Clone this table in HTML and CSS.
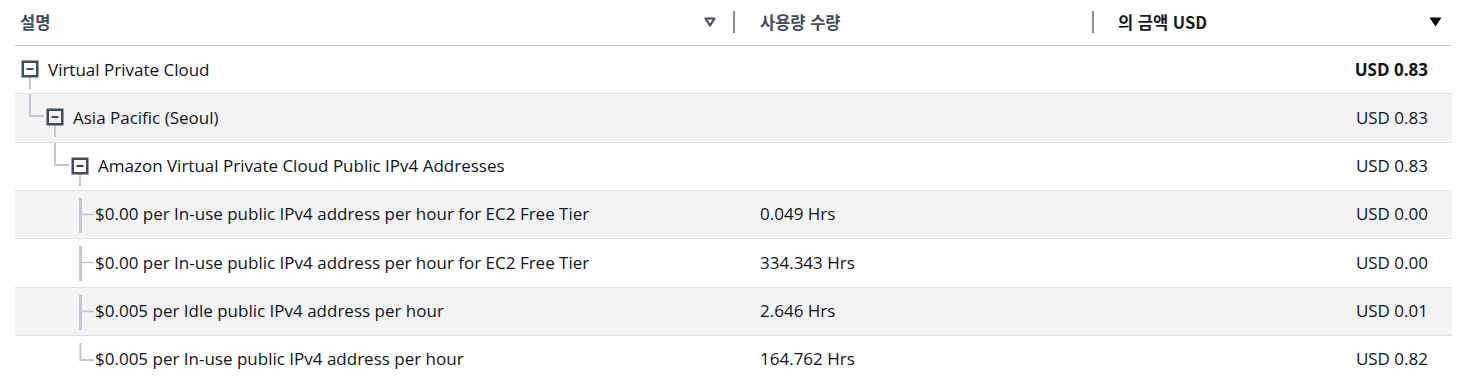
FILE: index.html
```html
<!DOCTYPE html>
<html lang="ko">
<head>
<meta charset="utf-8">
<link rel="stylesheet" href="styles.css">
</head>
<body>
<div class="table">
  <div class="row head">
    <div class="cell c1">
      <span class="htext">설명</span>
      <svg class="sort-outline" width="12" height="10" viewBox="0 0 12 10"><path d="M1.5 1.5 H10.5 L6 8.5 Z" fill="none" stroke="#414d5c" stroke-width="2.2" stroke-linejoin="round"/></svg>
      <span class="divider"></span>
    </div>
    <div class="cell c2"><span class="htext">사용량 수량</span><span class="divider"></span></div>
    <div class="cell c3"><span class="htext">의 금액 USD</span>
      <svg class="sort-filled" width="13" height="10" viewBox="0 0 13 10"><path d="M0.5 0.5 H12.5 L6.5 9.5 Z" fill="#000"/></svg>
    </div>
  </div>

  <div class="row">
    <div class="cell c1">
      <svg class="tree" width="33" height="48" viewBox="0 0 33 48">
        <line x1="15" y1="31" x2="15" y2="43" stroke="#c6c6cd" stroke-width="2"/>
        <rect x="7.75" y="15.75" width="14.5" height="14.5" fill="none" stroke="#414d5c" stroke-width="2.5"/>
        <line x1="11.5" y1="23" x2="18.5" y2="23" stroke="#414d5c" stroke-width="2"/>
      </svg>
      <span class="label">Virtual Private Cloud</span>
    </div>
    <div class="cell c2"></div>
    <div class="cell c3 bold">USD 0.83</div>
  </div>

  <div class="row alt">
    <div class="cell c1">
      <svg class="tree" width="58" height="48" viewBox="0 0 58 48">
        <polyline points="15,0 15,22 29,22" fill="none" stroke="#c6c6cd" stroke-width="2"/>
        <line x1="40" y1="31" x2="40" y2="43" stroke="#c6c6cd" stroke-width="2"/>
        <rect x="32.75" y="15.75" width="14.5" height="14.5" fill="none" stroke="#414d5c" stroke-width="2.5"/>
        <line x1="36.5" y1="23" x2="43.5" y2="23" stroke="#414d5c" stroke-width="2"/>
      </svg>
      <span class="label">Asia Pacific (Seoul)</span>
    </div>
    <div class="cell c2"></div>
    <div class="cell c3">USD 0.83</div>
  </div>

  <div class="row">
    <div class="cell c1">
      <svg class="tree" width="83" height="48" viewBox="0 0 83 48">
        <polyline points="40,0 40,22 54,22" fill="none" stroke="#c6c6cd" stroke-width="2"/>
        <line x1="65" y1="31" x2="65" y2="43" stroke="#c6c6cd" stroke-width="2"/>
        <rect x="57.75" y="15.75" width="14.5" height="14.5" fill="none" stroke="#414d5c" stroke-width="2.5"/>
        <line x1="61.5" y1="23" x2="68.5" y2="23" stroke="#414d5c" stroke-width="2"/>
      </svg>
      <span class="label">Amazon Virtual Private Cloud Public IPv4 Addresses</span>
    </div>
    <div class="cell c2"></div>
    <div class="cell c3">USD 0.83</div>
  </div>

  <div class="row alt">
    <div class="cell c1">
      <svg class="tree" width="80" height="48" viewBox="0 0 80 48">
        <line x1="65.5" y1="7" x2="65.5" y2="42" stroke="#c6c6cd" stroke-width="3"/>
        <line x1="66" y1="23.5" x2="79" y2="23.5" stroke="#c6c6cd" stroke-width="1.5"/>
      </svg>
      <span class="label">$0.00 per In-use public IPv4 address per hour for EC2 Free Tier</span>
    </div>
    <div class="cell c2">0.049 Hrs</div>
    <div class="cell c3">USD 0.00</div>
  </div>

  <div class="row">
    <div class="cell c1">
      <svg class="tree" width="80" height="48" viewBox="0 0 80 48">
        <line x1="65.5" y1="7" x2="65.5" y2="42" stroke="#c6c6cd" stroke-width="3"/>
        <line x1="66" y1="23.5" x2="79" y2="23.5" stroke="#c6c6cd" stroke-width="1.5"/>
      </svg>
      <span class="label">$0.00 per In-use public IPv4 address per hour for EC2 Free Tier</span>
    </div>
    <div class="cell c2">334.343 Hrs</div>
    <div class="cell c3">USD 0.00</div>
  </div>

  <div class="row alt">
    <div class="cell c1">
      <svg class="tree" width="80" height="48" viewBox="0 0 80 48">
        <line x1="65.5" y1="7" x2="65.5" y2="42" stroke="#c6c6cd" stroke-width="3"/>
        <line x1="66" y1="23.5" x2="79" y2="23.5" stroke="#c6c6cd" stroke-width="1.5"/>
      </svg>
      <span class="label">$0.005 per Idle public IPv4 address per hour</span>
    </div>
    <div class="cell c2">2.646 Hrs</div>
    <div class="cell c3">USD 0.01</div>
  </div>

  <div class="row">
    <div class="cell c1">
      <svg class="tree" width="80" height="48" viewBox="0 0 80 48">
        <polyline points="65.5,7 65.5,24 79,24" fill="none" stroke="#c6c6cd" stroke-width="2"/>
      </svg>
      <span class="label">$0.005 per In-use public IPv4 address per hour</span>
    </div>
    <div class="cell c2">164.762 Hrs</div>
    <div class="cell c3">USD 0.82</div>
  </div>
</div>
</body>
</html>
```

FILE: styles.css
```css
* { box-sizing: border-box; }
html, body { margin: 0; padding: 0; background: #fff; }
body {
  font-family: "Open Sans", "Noto Sans", "Noto Sans CJK KR", sans-serif;
  font-size: 17px;
  color: #0f141a;
}
.table {
  margin: 0 12px 0 15px;
  width: 1437px;
}
.row {
  display: grid;
  grid-template-columns: 720px 359px 358px;
  height: 48.33px;
  border-bottom: 1px solid #e2e2e6;
  background: #fff;
}
.row.alt { background: #f4f4f6; }
.row.head {
  height: 46px;
  border-bottom: 1px solid #c6c6cd;
  background: #fff;
}
.cell {
  display: flex;
  align-items: center;
  height: 100%;
  white-space: nowrap;
}
.label, .c2, .c3 { line-height: 1; }
.row:not(.head) .c2,
.row:not(.head) .c3,
.row:not(.head) .label { padding-bottom: 2px; }
.label { padding-bottom: 2px; }
.c1 { padding-left: 0; }
.c2 { padding-left: 25px; }
.c3 { justify-content: flex-end; padding-right: 24px; }
.bold { font-weight: 700; }

.head .cell { padding-bottom: 1px; }
.head .c1 { padding-left: 5px; }
.head .c2 { padding-left: 25px; }
.head .c3 { justify-content: space-between; padding-left: 24px; padding-right: 10px; }
.htext {
  font-family: "Noto Sans CJK KR", "Open Sans", sans-serif;
  font-weight: 700;
  font-size: 16.5px;
  color: #414d5c;
}
.head .c3 .htext { color: #16191f; }
.head .c1 .htext { flex: 1; }
.sort-outline { margin-right: 17px; }
.divider {
  width: 2px;
  height: 22px;
  background: #8c8c94;
  margin-left: auto;
}
.tree { flex: none; display: block; }
```
